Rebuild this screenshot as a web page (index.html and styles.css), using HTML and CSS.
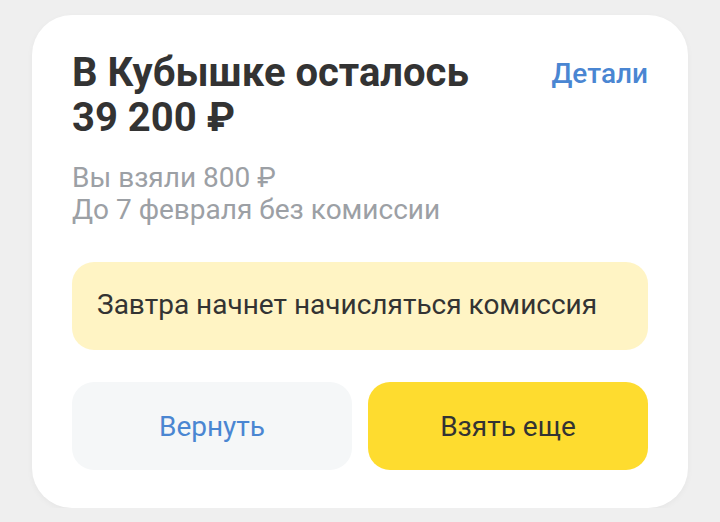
FILE: index.html
```html
<!DOCTYPE html>
<html>
<head>
  <meta charset="utf-8"/>
  <title>Кубышка</title>
  <link rel="stylesheet" href="styles.css">
</head>
<body>

<div class="card">
  <div class="header">
    <h1 class="title">В Кубышке осталось<br>39 200 ₽</h1>
    <a class="details" href="#">Детали</a>
  </div>
  <div class="info">
    <div>Вы взяли 800 ₽</div>
    <div>До 7 февраля без комиссии</div>
  </div>
  <div class="notice">Завтра начнет начисляться комиссия</div>
  <div class="buttons">
    <button type="button" class="back">Вернуть</button>
    <button type="button" class="more">Взять еще</button>
  </div>
</div>

</body>
</html>
```
FILE: styles.css
```css
body {
  margin: 0;
  background-color: #efefef;
  font-family: Roboto, "Noto Sans", sans-serif;
  color: #333;
}
.card {
  width: 576px;
  margin: 15px 0 0 32px;
  padding: 35px 40px 38px;
  background-color: #fff;
  border-radius: 40px;
  box-shadow: 0 2px 6px rgba(0, 0, 0, 0.04);
}
.header {
  display: flex;
  justify-content: space-between;
  align-items: flex-start;
}
.title {
  margin: 0;
  font-size: 40px;
  line-height: 45px;
  font-weight: 700;
  color: #333;
}
.details {
  margin-top: 8px;
  font-size: 28px;
  line-height: 32px;
  font-weight: 500;
  color: #4a86d2;
  text-decoration: none;
}
.info {
  margin-top: 22px;
  font-size: 28px;
  line-height: 32px;
  color: #9ca0a5;
}
.notice {
  margin-top: 36px;
  padding: 0 25px 4px;
  height: 88px;
  box-sizing: border-box;
  display: flex;
  align-items: center;
  background-color: #fff4c4;
  border-radius: 22px;
  font-size: 28px;
  color: #333;
}
.buttons {
  margin-top: 32px;
  display: grid;
  grid-template-columns: 1fr 1fr;
  gap: 16px;
}
.buttons button {
  height: 88px;
  border: none;
  border-radius: 22px;
  font-family: inherit;
  font-size: 28px;
}
.back {
  background-color: #f5f7f8;
  color: #4a86d2;
}
.more {
  background-color: #fedc2f;
  color: #333;
}
```
